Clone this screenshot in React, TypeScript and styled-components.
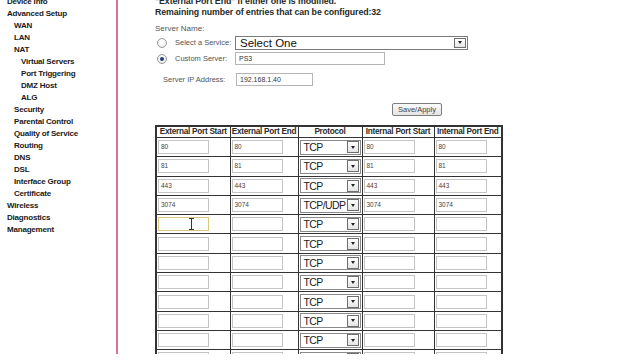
import React from 'react';
import styled, { createGlobalStyle } from 'styled-components';

const GlobalStyle = createGlobalStyle`
  html, body {
    margin: 0;
    padding: 0;
    background: #ffffff;
    overflow: hidden;
  }
  body {
    font-family: 'Liberation Sans', Arial, sans-serif;
  }
`;

type NavEntry = { label: string; level: number };

const navEntries: NavEntry[] = [
  { label: 'Device Info', level: 0 },
  { label: 'Advanced Setup', level: 0 },
  { label: 'WAN', level: 1 },
  { label: 'LAN', level: 1 },
  { label: 'NAT', level: 1 },
  { label: 'Virtual Servers', level: 2 },
  { label: 'Port Triggering', level: 2 },
  { label: 'DMZ Host', level: 2 },
  { label: 'ALG', level: 2 },
  { label: 'Security', level: 1 },
  { label: 'Parental Control', level: 1 },
  { label: 'Quality of Service', level: 1 },
  { label: 'Routing', level: 1 },
  { label: 'DNS', level: 1 },
  { label: 'DSL', level: 1 },
  { label: 'Interface Group', level: 1 },
  { label: 'Certificate', level: 1 },
  { label: 'Wireless', level: 0 },
  { label: 'Diagnostics', level: 0 },
  { label: 'Management', level: 0 },
];

type PortRow = {
  extStart: string;
  extEnd: string;
  protocol: string;
  intStart: string;
  intEnd: string;
};

const filledRows: PortRow[] = [
  { extStart: '80', extEnd: '80', protocol: 'TCP', intStart: '80', intEnd: '80' },
  { extStart: '81', extEnd: '81', protocol: 'TCP', intStart: '81', intEnd: '81' },
  { extStart: '443', extEnd: '443', protocol: 'TCP', intStart: '443', intEnd: '443' },
  { extStart: '3074', extEnd: '3074', protocol: 'TCP/UDP', intStart: '3074', intEnd: '3074' },
];

const emptyRow: PortRow = { extStart: '', extEnd: '', protocol: 'TCP', intStart: '', intEnd: '' };
const portRows: PortRow[] = [...filledRows, ...Array.from({ length: 10 }, () => emptyRow)];

export default function App() {
  return (
    <>
      <GlobalStyle />
      <Page>
        <Sidebar>
          {navEntries.map(entry => (
            <NavItem key={entry.label} level={entry.level}>
              {entry.label}
            </NavItem>
          ))}
        </Sidebar>

        <Main>
          <Note>"External Port End" if either one is modified.</Note>
          <Note>Remaining number of entries that can be configured:32</Note>

          <FieldLabel>Server Name:</FieldLabel>

          <RadioRow>
            <Radio checked={false} />
            <RadioLabel>Select a Service:</RadioLabel>
            <ServiceSelect>
              <SelectText>Select One</SelectText>
              <ArrowBox>
                <ArrowGlyph />
              </ArrowBox>
            </ServiceSelect>
          </RadioRow>

          <RadioRow>
            <Radio checked />
            <RadioLabel>Custom Server:</RadioLabel>
            <TextBox width={150}>PS3</TextBox>
          </RadioRow>

          <IpRow>
            <IpLabel>Server IP Address:</IpLabel>
            <TextBox width={77}>192.168.1.40</TextBox>
          </IpRow>

          <ButtonRow>
            <SaveButton>Save/Apply</SaveButton>
          </ButtonRow>

          <PortTable>
            <colgroup>
              <col style={{ width: 74 }} />
              <col style={{ width: 68 }} />
              <col style={{ width: 64 }} />
              <col style={{ width: 72 }} />
              <col style={{ width: 68 }} />
            </colgroup>
            <thead>
              <tr>
                <HeadCell>External Port Start</HeadCell>
                <HeadCell>External Port End</HeadCell>
                <HeadCell>Protocol</HeadCell>
                <HeadCell>Internal Port Start</HeadCell>
                <HeadCell>Internal Port End</HeadCell>
              </tr>
            </thead>
            <tbody>
              {portRows.map((row, i) => (
                <tr key={i}>
                  <Cell>
                    <PortInput focused={i === 4}>{row.extStart}</PortInput>
                    {i === 4 && <TextCursor />}
                  </Cell>
                  <Cell>
                    <PortInput>{row.extEnd}</PortInput>
                  </Cell>
                  <Cell>
                    <ProtoSelect>
                      <ProtoText>{row.protocol}</ProtoText>
                      <ProtoArrow>
                        <ArrowGlyph />
                      </ProtoArrow>
                    </ProtoSelect>
                  </Cell>
                  <Cell>
                    <PortInput>{row.intStart}</PortInput>
                  </Cell>
                  <Cell>
                    <PortInput>{row.intEnd}</PortInput>
                  </Cell>
                </tr>
              ))}
            </tbody>
          </PortTable>
        </Main>
      </Page>
    </>
  );
}

const Page = styled.div`
  display: flex;
  height: 360px;
  margin-top: -6px;
`;

const Sidebar = styled.nav`
  width: 116px;
  flex: none;
  border-right: 2px solid #d9739a;
  padding-top: 2px;
  height: 380px;
`;

const NavItem = styled.div<{ level: number }>`
  padding-left: ${props => 7 + props.level * 7}px;
  height: 12px;
  line-height: 12px;
  font-size: 8px;
  font-weight: bold;
  letter-spacing: -0.2px;
  color: #1a1a1a;
  white-space: nowrap;
`;

const Main = styled.main`
  padding-left: 37px;
  padding-top: 2px;
`;

const Note = styled.div`
  font-size: 8.8px;
  line-height: 11px;
  font-weight: bold;
  color: #1f2b28;
  letter-spacing: -0.1px;
  white-space: nowrap;
`;

const FieldLabel = styled.div`
  margin-top: 6px;
  font-size: 8px;
  line-height: 10px;
  color: #555;
`;

const RadioRow = styled.div`
  display: flex;
  align-items: center;
  height: 15px;
  margin-top: 1px;
`;

const Radio = styled.span<{ checked: boolean }>`
  position: relative;
  width: 10px;
  height: 10px;
  margin-left: 2px;
  border-radius: 50%;
  border: 1px solid #9a9a9a;
  background: radial-gradient(circle at 50% 40%, #ffffff 30%, #dcdcdc 100%);
  box-sizing: border-box;
  &::after {
    content: '';
    display: ${props => (props.checked ? 'block' : 'none')};
    position: absolute;
    left: 2px;
    top: 2px;
    width: 4px;
    height: 4px;
    border-radius: 50%;
    background: #1d3f73;
  }
`;

const RadioLabel = styled.span`
  width: 60px;
  margin-left: 8px;
  font-size: 7.5px;
  color: #555;
  white-space: nowrap;
`;

const ServiceSelect = styled.div`
  display: flex;
  align-items: center;
  justify-content: space-between;
  width: 233px;
  height: 14px;
  box-sizing: border-box;
  border: 1px solid #7a7a7a;
  background: #fff;
`;

const SelectText = styled.span`
  padding-left: 4px;
  font-size: 11.5px;
  color: #111;
`;

const ArrowBox = styled.span`
  display: flex;
  align-items: center;
  justify-content: center;
  width: 12px;
  height: 10px;
  margin-right: 1px;
  border: 1px solid #6e6e6e;
  background: linear-gradient(#ffffff, #e6e6e6);
  box-sizing: border-box;
`;

const ArrowGlyph = styled.span`
  width: 0;
  height: 0;
  border-left: 2.5px solid transparent;
  border-right: 2.5px solid transparent;
  border-top: 3px solid #222;
`;

const TextBox = styled.div<{ width: number }>`
  width: ${props => props.width}px;
  height: 13px;
  box-sizing: border-box;
  border: 1px solid #b5b5b5;
  padding-left: 3px;
  font-size: 7px;
  line-height: 11px;
  color: #333;
  background: #fff;
`;

const IpRow = styled.div`
  display: flex;
  align-items: center;
  margin-top: 7px;
  padding-left: 8px;
`;

const IpLabel = styled.span`
  width: 73px;
  font-size: 7.5px;
  color: #555;
  white-space: nowrap;
`;

const ButtonRow = styled.div`
  display: flex;
  padding-left: 237px;
  margin-top: 17px;
`;

const SaveButton = styled.div`
  width: 50px;
  height: 13px;
  box-sizing: border-box;
  border: 1px solid #7d7d7d;
  border-radius: 2px;
  background: linear-gradient(#fbfbfb, #e4e4e4);
  font-size: 7.5px;
  line-height: 11px;
  text-align: center;
  color: #444;
`;

const PortTable = styled.table`
  width: 346px;
  margin-top: 9px;
  border-collapse: collapse;
  border: 2px solid #333;
  table-layout: fixed;
`;

const HeadCell = styled.th`
  height: 10px;
  padding: 0;
  border: 1.5px solid #333;
  font-size: 8.2px;
  line-height: 10px;
  letter-spacing: -0.25px;
  font-weight: bold;
  color: #2a2a2a;
  white-space: nowrap;
  overflow: hidden;
  text-align: center;
`;

const Cell = styled.td`
  position: relative;
  height: 18.3px;
  padding: 0 0 0 1px;
  border: 1.5px solid #333;
  vertical-align: middle;
`;

const PortInput = styled.div<{ focused?: boolean }>`
  width: 51px;
  height: 14px;
  box-sizing: border-box;
  border: 1px solid ${props => (props.focused ? '#d9c878' : '#c4c4c4')};
  padding-left: 2px;
  font-size: 6.5px;
  line-height: 12px;
  color: #444;
  background: #fff;
`;

const TextCursor = styled.span`
  position: absolute;
  left: 34px;
  top: 3px;
  width: 1px;
  height: 12px;
  background: #333;
  &::before,
  &::after {
    content: '';
    position: absolute;
    left: -2px;
    width: 5px;
    height: 1px;
    background: #333;
  }
  &::before {
    top: 0;
  }
  &::after {
    bottom: 0;
  }
`;

const ProtoSelect = styled.div`
  display: flex;
  align-items: center;
  justify-content: space-between;
  width: 61px;
  height: 15px;
  box-sizing: border-box;
  border: 1px solid #8a8a8a;
  background: #fff;
`;

const ProtoText = styled.span`
  padding-left: 3px;
  font-size: 10.5px;
  letter-spacing: -0.6px;
  color: #222;
  white-space: nowrap;
`;

const ProtoArrow = styled.span`
  display: flex;
  align-items: center;
  justify-content: center;
  width: 12px;
  height: 12px;
  margin-right: 1px;
  border: 1px solid #6e6e6e;
  box-sizing: border-box;
  background: linear-gradient(#ffffff, #e4e4e4);
`;
